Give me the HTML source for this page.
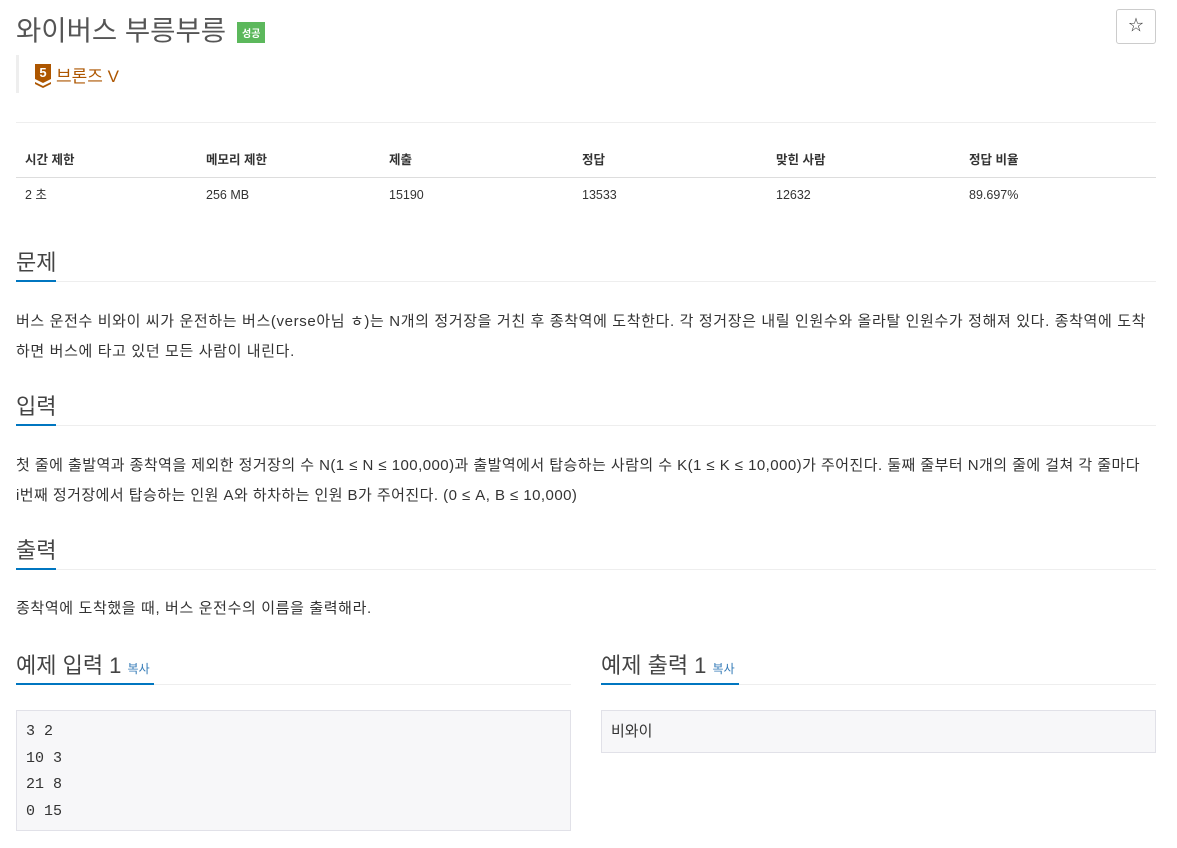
<!DOCTYPE html>
<html><head><meta charset="utf-8"><style>
*{box-sizing:border-box;margin:0;padding:0}
body{width:1177px;height:848px;background:#fff;font-family:"Liberation Sans","Noto Sans CJK KR",sans-serif;color:#333;position:relative;overflow:hidden}
.a{position:absolute}
h1{font-weight:400;font-size:27.5px;color:#555;left:16px;top:8px;position:absolute;white-space:nowrap}
.badge{background:#5cb85c;color:#fff;font-size:10px;font-weight:bold;padding:3px 5px;position:absolute;left:237px;top:22px}
.star{left:1116px;top:9px;width:40px;height:35px;border:1px solid #ccc;border-radius:3px;text-align:center;line-height:32px;font-size:15px}
.tier{left:16px;top:55px;height:38px;border-left:3px solid #eee;padding-left:15px}
.hr{left:16px;width:1140px;height:1px;background:#eee}
.th{font-size:12.5px;font-weight:bold;top:151px;line-height:18px}
.td{font-size:12.5px;top:186px;line-height:18px}
.sec{font-size:22px;color:#444;left:16px;white-space:nowrap}
.ul{left:16px;height:2px;width:40px;background:#0076c0}
.p{left:16px;font-size:15px;letter-spacing:0.63px;line-height:30px;width:1150px;color:#333;white-space:nowrap}
pre{font-family:"Liberation Mono","Noto Sans CJK KR",monospace;font-size:15px;line-height:26.5px;background:#f7f7f9;border:1px solid #e1e1e8;padding:8px 9px;position:absolute}
.copy{font-size:12px;color:#337ab7}
</style></head><body>
<h1>와이버스 부릉부릉</h1>
<div class="badge">성공</div>
<div class="a star">☆</div>
<div class="a tier"><svg width="18" height="24" viewBox="0 0 18 24" style="position:absolute;left:15px;top:9px"><path d="M1 0h16v15l-8 4-8-4z" fill="#ad5600"/><path d="M1 18l8 4 8-4v2l-8 4-8-4z" fill="#ad5600"/><text x="9" y="13" font-size="13" font-weight="bold" fill="#fff" text-anchor="middle" font-family="Liberation Sans">5</text></svg><span style="position:absolute;left:37px;top:7px;font-size:17px;color:#ad5600;white-space:nowrap">브론즈 V</span></div>
<div class="a hr" style="top:122px"></div>
<div class="a th" style="left:25px">시간 제한</div><div class="a th" style="left:206px">메모리 제한</div><div class="a th" style="left:389px">제출</div><div class="a th" style="left:582px">정답</div><div class="a th" style="left:776px">맞힌 사람</div><div class="a th" style="left:969px">정답 비율</div>
<div class="a hr" style="top:177px;background:#ddd"></div>
<div class="a td" style="left:25px">2 초</div><div class="a td" style="left:206px">256 MB</div><div class="a td" style="left:389px">15190</div><div class="a td" style="left:582px">13533</div><div class="a td" style="left:776px">12632</div><div class="a td" style="left:969px">89.697%</div>
<div class="a sec" style="top:245px">문제</div><div class="a hr" style="top:281px"></div><div class="a ul" style="top:280px"></div>
<div class="a p" style="top:307px">버스 운전수 비와이 씨가 운전하는 버스(verse아님 ㅎ)는 N개의 정거장을 거친 후 종착역에 도착한다. 각 정거장은 내릴 인원수와 올라탈 인원수가 정해져 있다. 종착역에 도착<br>하면 버스에 타고 있던 모든 사람이 내린다.</div>
<div class="a sec" style="top:389px">입력</div><div class="a hr" style="top:425px"></div><div class="a ul" style="top:424px"></div>
<div class="a p" style="top:451px;letter-spacing:0.45px">첫 줄에 출발역과 종착역을 제외한 정거장의 수 N(1 ≤ N ≤ 100,000)과 출발역에서 탑승하는 사람의 수 K(1 ≤ K ≤ 10,000)가 주어진다. 둘째 줄부터 N개의 줄에 걸쳐 각 줄마다<br>i번째 정거장에서 탑승하는 인원 A와 하차하는 인원 B가 주어진다. (0 ≤ A, B ≤ 10,000)</div>
<div class="a sec" style="top:533px">출력</div><div class="a hr" style="top:569px"></div><div class="a ul" style="top:568px"></div>
<div class="a p" style="top:594px">종착역에 도착했을 때, 버스 운전수의 이름을 출력해라.</div>
<div class="a sec" style="top:648px">예제 입력 1 <span class="copy">복사</span></div><div class="a hr" style="top:684px;width:555px"></div><div class="a ul" style="top:683px;width:138px"></div>
<div class="a sec" style="top:648px;left:601px">예제 출력 1 <span class="copy">복사</span></div><div class="a hr" style="top:684px;left:601px;width:555px"></div><div class="a ul" style="top:683px;left:601px;width:138px"></div>
<pre style="left:16px;top:710px;width:555px;height:121px">3 2
10 3
21 8
0 15</pre>
<pre style="left:601px;top:710px;width:555px;height:43px;padding-top:9px">비와이</pre>
</body></html>
